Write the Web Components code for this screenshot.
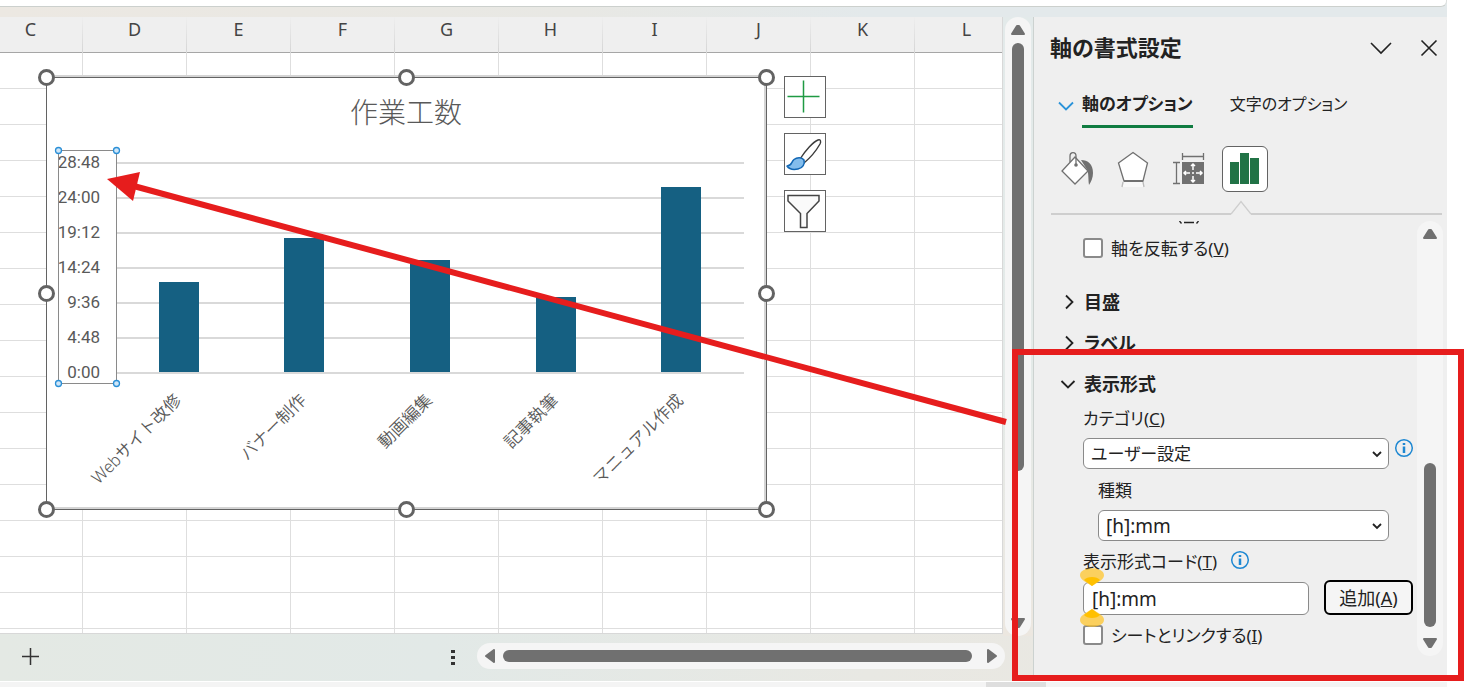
<!DOCTYPE html>
<html lang="ja">
<head>
<meta charset="utf-8">
<title>作業工数</title>
<style>
    html, body {
        height: 100%;
        margin: 0;
    }
    body {
        background: #fff;
        color: #222;
        font: 17px/24px "Noto Sans", "Noto Sans CJK JP", sans-serif;
        overflow: hidden;
    }
</style>
</head>
<body>
<excel-window>
    <sheet-grid slot="sheet">
        <chart-object></chart-object>
        <chart-tools></chart-tools>
    </sheet-grid>
    <scroll-bar slot="rail" start="0" size="428"></scroll-bar>
    <sheet-tabs slot="tabs"></sheet-tabs>
    <format-pane slot="pane">
        <check-row name="reverse">軸を反転する(<u>V</u>)</check-row>
        <pane-section heading="目盛"></pane-section>
        <pane-section heading="ラベル"></pane-section>
        <pane-section heading="表示形式" open>
            <number-format></number-format>
        </pane-section>
    </format-pane>
</excel-window>
<callout-layer></callout-layer>

<script>
function attach(el, html) {
    el.attachShadow({mode: 'open'});
    el.shadowRoot.innerHTML = html;
    return el.shadowRoot;
}

// window frame: ribbon edge, sheet, vertical rail, tab bar, side pane
class ExcelWindow extends HTMLElement {
    constructor() {
        super();
        attach(this, `
<style>
    :host {
        display: flex;
        flex-direction: column;
        height: 100vh;
        margin-right: 18px;
    }
    .ribbon {
        height: 17px;
        flex: none;
        background: linear-gradient(90deg, #ece8e2, #e8e8e4 40%, #e3e9eb 60%, #e3e9eb);
    }
    .ribbon div {
        height: 6px;
        background: #fff;
        border-bottom: 1px solid #ccd0cd;
        border-right: 1px solid #dde0de;
        border-radius: 0 0 6px 0;
    }
    .main {
        flex: 1;
        min-height: 0;
        display: grid;
        grid-template-columns: minmax(0, 1fr) 30px 414px;
        grid-template-rows: minmax(0, 1fr) 47px;
        background: linear-gradient(90deg, #e4e9e4, #e2e9e7 30%, #e8e8e3 60%, #ece7e0);
    }
    .rail {
        background: linear-gradient(#e3eaea, #e4eae8 60%, #ece7e0);
        padding-left: 2px;
        display: flex;
        margin-bottom: -2px;
    }
    .pane {
        grid-column: 3;
        grid-row: 1 / 3;
        min-height: 0;
    }
    .tabs {
        grid-column: 1 / 3;
        grid-row: 2;
    }
    .foot {
        height: 5px;
        flex: none;
        border-top: 1px solid #fff;
        background: #f4f4f4;
        display: flex;
        justify-content: flex-end;
    }
    .foot div {
        width: 60px;
        margin-right: 401px;
        background: #dedede;
    }
</style>
<div class="ribbon"><div></div></div>
<div class="main">
    <slot name="sheet"></slot>
    <div class="rail"><slot name="rail"></slot></div>
    <div class="tabs"><slot name="tabs"></slot></div>
    <div class="pane"><slot name="pane"></slot></div>
</div>
<div class="foot"><div></div></div>
`);
    }
}

class SheetGrid extends HTMLElement {
    constructor() {
        super();
        const cols = 'CDEFGHIJKL'.split('');
        const head = cols.map(c => `<th scope="col">${c}</th>`).join('');
        const row = '<tr>' + '<td></td>'.repeat(cols.length) + '</tr>';
        attach(this, `
<style>
    :host {
        display: block;
        position: relative;
        overflow: hidden;
        background: #fff;
        border-right: 1px solid #d8d8d8;
        border-bottom: 1px solid #d8d8d8;
        box-sizing: border-box;
    }
    table {
        width: 1040px;
        margin-left: -21px;
        table-layout: fixed;
        border-collapse: separate;
        border-spacing: 0;
    }
    th, td {
        box-sizing: border-box;
        height: 36px;
        padding: 0;
        border-right: 1px solid #dedede;
        border-bottom: 1px solid #dedede;
    }
    th {
        background: #efefef;
        border-right: 1px solid;
        border-image: linear-gradient(#efefef, #d4d4d4) 1;
        box-shadow: inset 0 -1px #a6a6a6;
        color: #444;
        font-size: 18px;
        font-weight: 400;
        line-height: 24px;
        padding-bottom: 12px;
        border-bottom: 0;
    }
</style>
<table>
    <thead><tr>${head}</tr></thead>
    <tbody>${row.repeat(17)}</tbody>
</table>
<slot></slot>
`);
    }
}

class ChartObject extends HTMLElement {
    constructor() {
        super();
        const ticks = ['28:48', '24:00', '19:12', '14:24', '9:36', '4:48', '0:00'];
        const data = [
            ['Webサイト改修', 90],
            ['バナー制作', 134],
            ['動画編集', 112],
            ['記事執筆', 75],
            ['マニュアル作成', 185],
        ];
        const left = 70, right = 698, base = 295, step = 35;
        const band = (right - left) / data.length;

        let grid = '', labels = '', bars = '', cats = '';
        ticks.forEach((t, i) => {
            const y = 86 + i * step;
            grid += `<path d="M${left} ${y}H${right}"/>`;
            labels += `<text x="54" y="${y + 5}">${t}</text>`;
        });
        data.forEach(([name, h], i) => {
            const cx = Math.round(left + band * (i + 0.5));
            bars += `<rect x="${cx - 20}" y="${base - h}" width="40" height="${h}"/>`;
            cats += `<text transform="translate(${cx - 1} 320) rotate(-45)" dy="6">${name}</text>`;
        });
        const handles = [[0, 0], [360, 0], [720, 0], [0, 216], [720, 216], [0, 432], [360, 432], [720, 432]]
            .map(([x, y]) => `<circle cx="${x}" cy="${y}" r="7"/>`).join('');
        const dots = [[12, 73], [70, 73], [12, 306], [70, 306]]
            .map(([x, y]) => `<circle cx="${x}" cy="${y}" r="3"/>`).join('');

        attach(this, `
<style>
    :host {
        display: block;
        position: absolute;
        left: 36px;
        top: 50px;
    }
    svg { display: block; }
    text { fill: #595959; }
    .title { font: 300 28px "Noto Sans CJK JP", sans-serif; text-anchor: middle; }
    .ticks { font: 17px Roboto, sans-serif; text-anchor: end; }
    .cats { font: 350 17px Roboto, "Noto Sans CJK JP", sans-serif; font-kerning: none; text-anchor: end; }
    .grid { stroke: #d9d9d9; stroke-width: 2; }
    .bars { fill: #156082; }
    .handles { fill: #fff; stroke: #636363; stroke-width: 3; }
    .dots { fill: #cfe6f8; stroke: #2b8fd6; stroke-width: 1.3; }
</style>
<svg width="741" height="453" viewBox="-10 -10 741 453" role="img" aria-label="作業工数">
    <g transform="translate(.5 .5)" fill="none" stroke="#636363">
        <rect width="720" height="432" fill="#fff"/>
        <path d="M0 -1.500H720M0 430.500H720M718.500 0V432" stroke="#d4d4d4" stroke-width="2"/>
        <rect width="720" height="432"/>
    </g>
    <text class="title" x="360" y="46">作業工数</text>
    <g class="grid">${grid}</g>
    <g class="bars">${bars}</g>
    <g class="ticks">${labels}</g>
    <g class="cats">${cats}</g>
    <g transform="translate(.5 .5)">
        <rect x="12" y="73" width="58" height="233" fill="none" stroke="#8a8a8a"/>
        <g class="dots">${dots}</g>
        <g class="handles">${handles}</g>
    </g>
</svg>
`);
    }
}

class ChartTools extends HTMLElement {
    constructor() {
        super();
        attach(this, `
<style>
    :host {
        position: absolute;
        left: 784px;
        top: 59px;
        display: flex;
        flex-direction: column;
        gap: 15px;
    }
    button {
        width: 42px;
        height: 42px;
        padding: 0;
        background: #fff;
        border: 1px solid #636363;
    }
    svg { display: block; }
</style>
<button aria-label="グラフ要素">
    <svg width="40" height="40" fill="none" stroke="#1f9a43" stroke-width="1.500"><path d="M2.500 19.500H34.500M18.500 3.500V35.500"/></svg>
</button>
<button aria-label="グラフ スタイル">
    <svg width="40" height="40" fill="none" stroke="#3b3b3b" stroke-width="1.400" stroke-linejoin="round">
        <path d="M15 25C20 17 28 8 33 6C36 5 36 8 35 10C31 17 25 24 19 29Z" fill="#fff"/>
        <path d="M2 32C7 32 6 28 9 25.500C12 23 17 23 19 26C20 30 18 34 13 35C8 36 4 35 2 32Z" fill="#83bdec" stroke="#1267b4" stroke-width="1.500"/>
    </svg>
</button>
<button aria-label="グラフ フィルター">
    <svg width="40" height="40" fill="#fafafa" stroke="#444" stroke-width="1.500"><path d="M3 4.500H34V10L22 22.500V36.500H15.500V22.500L3 10Z"/></svg>
</button>
`);
    }
}

class ScrollBar extends HTMLElement {
    constructor() {
        super();
        attach(this, `
<style>
    :host {
        display: flex;
        flex-direction: column;
        align-items: center;
        box-sizing: border-box;
        width: 26px;
        padding: 8px 0;
        border-radius: 13px;
        background: #f5f5f5;
    }
    :host([horizontal]) {
        flex-direction: row;
        width: auto;
        height: 26px;
        padding: 0 8px;
    }
    svg { flex: none; display: block; fill: #707070; stroke: #707070; stroke-width: 2; stroke-linejoin: round; }
    .track {
        flex: 1;
        min-height: 0;
        width: 12px;
        margin: 8px 0;
    }
    :host([horizontal]) .track {
        width: auto;
        height: 12px;
        margin: 0 8px;
    }
    .thumb {
        border-radius: 6px;
        background: #707070;
        width: 12px;
    }
    :host([horizontal]) .thumb {
        width: auto;
        height: 12px;
        margin-right: 7px;
    }
</style>
<svg class="back" width="14" height="10"></svg>
<div class="track"><div class="thumb"></div></div>
<svg class="next" width="14" height="10"></svg>
`);
    }
    connectedCallback() {
        const back = this.shadowRoot.querySelector('.back');
        const next = this.shadowRoot.querySelector('.next');
        const thumb = this.shadowRoot.querySelector('.thumb');
        if (this.hasAttribute('horizontal')) {
            for (const s of [back, next]) {
                s.setAttribute('width', 10);
                s.setAttribute('height', 14);
            }
            back.innerHTML = '<path d="M9 1V13L1 7Z"/>';
            next.innerHTML = '<path d="M1 1V13L9 7Z"/>';
            return;
        }
        back.innerHTML = '<path d="M1 9H13L8 1H6Z"/>';
        next.innerHTML = '<path d="M1 1H13L8 9H6Z"/>';
        thumb.style.marginTop = this.getAttribute('start') + 'px';
        thumb.style.height = this.getAttribute('size') + 'px';
    }
}

class SheetTabs extends HTMLElement {
    constructor() {
        super();
        attach(this, `
<style>
    :host {
        display: flex;
        align-items: center;
        height: 100%;
        box-sizing: border-box;
        padding: 0 28px 4px 18px;
    }
    button {
        width: 24px;
        height: 24px;
        padding: 0;
        border: 0;
        background: none;
    }
    svg { display: block; }
    .more { margin-left: auto; margin-right: 12px; }
    scroll-bar { flex: 0 1 528px; }
</style>
<button aria-label="新しいシート"><svg width="24" height="24" stroke="#333" stroke-width="1.500"><path d="M4 12.500H21M12.500 4V21"/></svg></button>
<button class="more" aria-label="その他"><svg width="24" height="24" fill="#333"><path d="M10 6h4v3h-4zM10 12h4v3h-4zM10 18h4v3h-4z"/></svg></button>
<scroll-bar horizontal></scroll-bar>
`);
    }
}

class FormatPane extends HTMLElement {
    constructor() {
        super();
        attach(this, `
<style>
    :host {
        display: flex;
        flex-direction: column;
        box-sizing: border-box;
        height: 100%;
        background: #efefef;
        border-left: 1px solid #ccd2d0;
        font-feature-settings: "palt";
    }
    button { font: inherit; color: inherit; background: none; border: 0; padding: 0; }
    svg { display: block; }
    header {
        display: flex;
        align-items: center;
        height: 62px;
        padding: 0 6px 0 16px;
    }
    h2 { flex: 1; margin: 0; font-size: 22px; line-height: 32px; font-weight: 700; padding-bottom: 2px; }
    header button { width: 24px; height: 24px; margin-left: 24px; }
    .tabs { display: flex; align-items: center; height: 50px; padding-left: 24px; }
    .tabs svg { margin-right: 8px; }
    .tabs button { height: 48px; margin-right: 37px; font-size: 16px; }
    .tabs [aria-selected=true] { font-size: 17px; font-weight: 700; border-bottom: 3px solid #107c41; padding-top: 3px; }
    .icons { display: flex; gap: 10px; padding: 17px 0 0 20px; }
    .icons button {
        width: 46px;
        height: 46px;
        box-sizing: border-box;
        border: 1px solid transparent;
        border-radius: 6px;
    }
    .icons .on { background: #fff; border-color: #636363; }
    .rule {
        display: flex;
        align-items: flex-end;
        height: 15px;
        margin: 8px 5px 0 17px;
    }
    .rule i { height: 2px; background: #cecece; width: 180px; }
    .rule i:last-child { width: auto; flex: 1; }
    .body {
        flex: 1;
        min-height: 0;
        display: flex;
        margin: 6px 4px 0 0;
        overflow: hidden;
    }
    .fields { flex: 1; padding-left: 26px; min-width: 0; }
    .cut { height: 15px; padding-left: 118px; }
    scroll-bar { margin-bottom: 25px; }
</style>
<header>
    <h2>軸の書式設定</h2>
    <button aria-label="ウィンドウ オプション"><svg width="24" height="24" fill="none" stroke="#222" stroke-width="1.600"><path d="M2 7L12 17L22 7"/></svg></button>
    <button aria-label="閉じる"><svg width="24" height="24" fill="none" stroke="#222" stroke-width="1.600"><path d="M4.500 4.500L19.500 19.500M19.500 4.500L4.500 19.500"/></svg></button>
</header>
<div class="tabs" role="tablist">
    <svg width="16" height="16" fill="none" stroke="#2b93d9" stroke-width="1.800"><path d="M1 6.500L8 13.500L15 6.500"/></svg>
    <button role="tab" aria-selected="true">軸のオプション</button>
    <button role="tab" aria-selected="false">文字のオプション</button>
</div>
<div class="icons">
    <button aria-label="塗りつぶしと線">
        <svg width="44" height="44" fill="none" stroke="#707070" stroke-width="1.300">
            <path d="M26 13C33 13 38 17 38 26C38 31 36 35 34 38C33 31 34 24 31 21Z" fill="#707070" stroke="none"/>
            <path d="M20 10L33 24L20 37L7 24Z" fill="#fff"/>
            <path d="M15 15V9C15 4.500 21 4.500 21 9V17"/>
            <circle cx="21" cy="18" r="1.800" fill="#707070" stroke="none"/>
        </svg>
    </button>
    <button aria-label="効果">
        <svg width="44" height="44" fill="none" stroke="#707070" stroke-width="1.300">
            <path d="M14 34L11 40H33L31 34Z" fill="#f8f8f8" stroke="none"/>
            <path d="M12 35L11 40M32 35L33 40" stroke="#bbb"/>
            <path d="M22 5.500L36.500 16L32 34H13L7.500 16Z" fill="#fff"/>
            <path d="M13 34H32" stroke-width="2"/>
        </svg>
    </button>
    <button aria-label="サイズとプロパティ">
        <svg width="44" height="44" fill="none" stroke="#707070" stroke-width="1.300">
            <path d="M15.500 6V13M36.500 6V13M15.500 9.500H36.500M6 15.500H13M6 36.500H13M9.500 15.500V36.500"/>
            <rect x="15" y="15" width="22" height="22" fill="#707070" stroke="none"/>
            <path d="M26 17V23M26 29V35M17 26H23M29 26H35M25 26H27M24 19L26 17L28 19M24 33L26 35L28 33M19 24L17 26L19 28M33 24L35 26L33 28" stroke="#fff" stroke-width="1.500"/>
        </svg>
    </button>
    <button class="on" aria-label="軸のオプション">
        <svg width="44" height="44" fill="#217346"><path d="M7 15h9v22H7zM17 6h9v31h-9zM27 11h9v26h-9z"/></svg>
    </button>
</div>
<div class="rule"><i></i><svg width="20" height="15" fill="none" stroke="#cecece" stroke-width="1.400"><path d="M0 14L10 1.500L20 14"/></svg><i></i></div>
<div class="body">
    <div class="fields">
        <div class="cut"><svg width="22" height="4" fill="none" stroke="#222" stroke-width="1.300" aria-hidden="true"><path d="M1.500 0L3.500 2.500M6 1.500H16M20.500 0L18.500 2.500"/></svg></div>
        <slot></slot>
    </div>
    <scroll-bar start="216" size="164"></scroll-bar>
</div>
`);
    }
}

class CheckRow extends HTMLElement {
    constructor() {
        super();
        attach(this, `
<style>
    :host { display: block; padding-left: 23px; }
    label { display: flex; align-items: center; gap: 8px; height: 24px; }
    span { padding-top: 2px; }
    input {
        appearance: none;
        box-sizing: border-box;
        width: 20px;
        height: 20px;
        margin: 0;
        border: 2px solid #8a8a8a;
        border-radius: 3px;
        background: #fff;
    }
</style>
<label><input type="checkbox"><span><slot></slot></span></label>
`);
    }
}

class PaneSection extends HTMLElement {
    constructor() {
        super();
        const open = this.hasAttribute('open');
        attach(this, `
<style>
    :host { display: block; margin-top: 17px; }
    :host(:first-of-type) { margin-top: 30px; }
    button {
        display: flex;
        align-items: center;
        gap: 8px;
        height: 24px;
        padding: 0;
        border: 0;
        background: none;
        color: inherit;
        font: inherit;
        font-size: 18px;
        font-weight: 700;
    }
    svg { display: block; }
</style>
<button aria-expanded="${open}">
    <svg width="16" height="16" fill="none" stroke="#222" stroke-width="1.800"><path d="${open ? 'M1.500 5L8 11.500L14.500 5' : 'M6 1.500L12.500 8L6 14.500'}"/></svg>
    ${this.getAttribute('heading')}
</button>
<slot></slot>
`);
    }
}

class InfoDot extends HTMLElement {
    constructor() {
        super();
        attach(this, `
<style>
    :host { display: block; width: 20px; height: 20px; }
    svg { display: block; }
</style>
<svg width="20" height="20" fill="none" stroke="#1e88d2" role="img" aria-label="情報">
    <circle cx="10" cy="10" r="8.300" stroke-width="1.500"/>
    <path d="M10 8.500V15M10 5V7" stroke-width="2.500"/>
</svg>
`);
    }
}

class NumberFormat extends HTMLElement {
    constructor() {
        super();
        attach(this, `
<style>
    :host { display: block; padding: 11px 3px 0 23px; }
    .line { display: flex; align-items: flex-start; }
    .line info-dot { margin-left: 5px; }
    label { display: block; height: 24px; }
    .pick { position: relative; flex: 1; }
    .pick svg { position: absolute; right: 6px; top: 10px; pointer-events: none; }
    select, input, button {
        box-sizing: border-box;
        color: inherit;
        font: inherit;
        font-feature-settings: inherit;
        border: 1px solid #8a8a8a;
        border-radius: 6px;
        background: #fff;
    }
    select { display: block; appearance: none; width: 100%; height: 31px; padding: 0 7px; }
    input { flex: 1; min-width: 0; height: 33px; padding: 0 8px; font-size: 19px; margin-top: 2px; }
    button { width: 89px; height: 35px; padding: 0; border: 2px solid #000; background: #f5f5f5; margin-left: 15px; font-size: 18px; }
    .cat { margin-top: 7px; }
    .type { padding: 10px 25px 0 15px; }
    .type select { margin-top: 7px; font-size: 19px; }
    .code { margin-top: 9px; }
    .code info-dot { margin-left: 13px; }
    .add { margin-top: 6px; margin-right: 1px; }
    check-row { margin: 8px 0 0 -23px; }
</style>
<label for="cat">カテゴリ(<u>C</u>)</label>
<div class="line cat">
    <div class="pick">
        <select id="cat"><option>ユーザー設定</option></select>
        <svg width="12" height="12" fill="none" stroke="#222" stroke-width="1.800"><path d="M2 4L6 8L10 4"/></svg>
    </div>
    <info-dot></info-dot>
</div>
<div class="type">
    <label for="type">種類</label>
    <div class="pick">
        <select id="type"><option>[h]:mm</option></select>
        <svg width="12" height="12" fill="none" stroke="#222" stroke-width="1.800"><path d="M2 4L6 8L10 4"/></svg>
    </div>
</div>
<div class="line code"><label for="code">表示形式コード(<u>T</u>)</label><info-dot></info-dot></div>
<div class="line add">
    <input id="code" type="text" value="[h]:mm">
    <button>追加(<u>A</u>)</button>
</div>
<check-row>シートとリンクする(<u>I</u>)</check-row>
`);
    }
}

// red frame, arrow and text grips drawn over the window
class CalloutLayer extends HTMLElement {
    constructor() {
        super();
        attach(this, `
<style>
    :host {
        position: absolute;
        inset: 0;
        pointer-events: none;
    }
    svg { display: block; width: 100%; height: 100%; }
</style>
<svg>
    <path d="M130 185L1006 422" stroke="#e61d1d" stroke-width="6"/>
    <path d="M107 179L140 172L133 201Z" fill="#e61d1d"/>
    <rect x="1015" y="352" width="446" height="326" fill="none" stroke="#e61d1d" stroke-width="6"/>
    <path d="M1080 575C1080 566 1104 566 1104 575C1104 579 1100 581 1092 586C1084 581 1080 579 1080 575Z" fill="#ffc52e" fill-opacity=".75"/>
    <path d="M1084 580C1087 576 1097 576 1100 580L1092 586Z" fill="#ffc000"/>
    <path d="M1080 620C1080 629 1104 629 1104 620C1104 616 1100 614 1092 609C1084 614 1080 616 1080 620Z" fill="#ffc52e" fill-opacity=".75"/>
    <path d="M1084 615C1087 619 1097 619 1100 615L1092 609Z" fill="#ffc000"/>
</svg>
`);
    }
}

customElements.define('excel-window', ExcelWindow);
customElements.define('sheet-grid', SheetGrid);
customElements.define('chart-object', ChartObject);
customElements.define('chart-tools', ChartTools);
customElements.define('scroll-bar', ScrollBar);
customElements.define('sheet-tabs', SheetTabs);
customElements.define('format-pane', FormatPane);
customElements.define('check-row', CheckRow);
customElements.define('pane-section', PaneSection);
customElements.define('info-dot', InfoDot);
customElements.define('number-format', NumberFormat);
customElements.define('callout-layer', CalloutLayer);
</script>
</body>
</html>
